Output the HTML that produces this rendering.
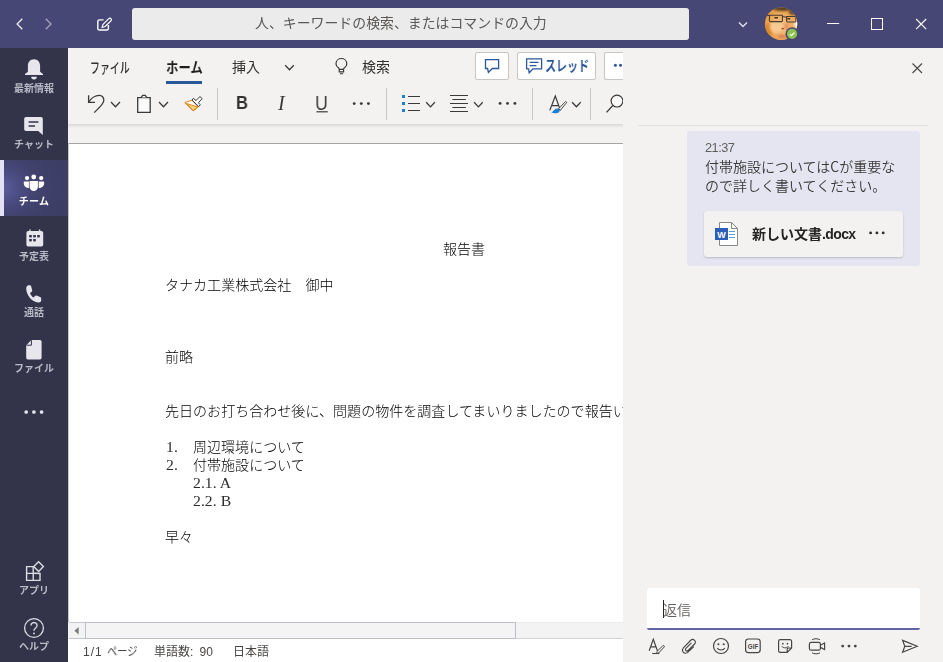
<!DOCTYPE html>
<html lang="ja"><head><meta charset="utf-8"><title>Microsoft Teams</title>
<style>
*{box-sizing:border-box;margin:0;padding:0}
html,body{width:943px;height:662px;overflow:hidden;background:#f3f2f1}
body{font-family:"Liberation Sans","Noto Sans CJK JP",sans-serif;position:relative;color:#252423}
.abs{position:absolute}
.tab,.doc,.msg,.lbl,.st,#search{will-change:transform}
svg{position:absolute;overflow:visible}
#title{left:0;top:0;width:943px;height:48px;background:#464775}
#search{left:132px;top:8px;width:557px;height:32px;background:#ebebeb;border-radius:3px;color:#5a5856;font-size:13.900px;text-align:left;padding-left:123px;line-height:29px;white-space:nowrap;font-family:"Noto Sans CJK JP","Liberation Sans",sans-serif}
#side{left:0;top:48px;width:68px;height:614px;background:#33344a}
#active{left:0;top:160px;width:68px;height:56px;background:radial-gradient(ellipse 62px 48px at 0 50%,#5e60a0 0%,#4b4c82 32%,#41426d 62%,#3d3e66 100%)}
#activebar{left:0;top:160px;width:4px;height:56px;background:#e2e2f6}
.lbl{position:absolute;left:0;width:68px;text-align:center;color:#b9b9c6;font-size:10px;font-weight:700;line-height:12px;font-family:"Noto Sans CJK JP","Liberation Sans",sans-serif;white-space:nowrap}
#docbg{left:68px;top:48px;width:555px;height:614px;background:#f3f2f1}
#page{left:68px;top:143px;width:555px;height:479px;background:#fff;border-top:1px solid #a6a6a6;border-left:1px solid #c6c6c6}
#shadow{left:68px;top:124px;width:555px;height:4px;background:linear-gradient(#d9d8d7,#f3f2f1)}
.tab{position:absolute;font-size:14px;color:#323130;line-height:18px;white-space:nowrap;font-family:"Noto Sans CJK JP","Liberation Sans",sans-serif}
.doc{letter-spacing:.04px;position:absolute;font-family:"Noto Sans CJK JP","Liberation Sans",sans-serif;font-weight:300;font-size:14px;color:#000;line-height:18px;white-space:nowrap}
.ser{font-family:"Liberation Serif","Noto Serif CJK JP",serif;font-weight:400}
.btn{position:absolute;background:#fff;border:1px solid #c8c6c4;border-radius:2px}
.sep{position:absolute;width:1px;top:88px;height:32px;background:#c8c6c4}
#sbar{left:69px;top:622px;width:554px;height:17px;background:#f3f3f3;border-top:1px solid #ececec;border-bottom:1px solid #d3d3d3}
#sbtn{left:69px;top:622px;width:17px;height:17px;background:#f3f3f3;border-top:1px solid #c2c5c9;border-bottom:1px solid #c2c5c9}
#thumb{left:85px;top:622px;width:431px;height:17px;background:#f4f4f4;border:1px solid #bcc0c6;border-left-width:1.500px}
#status{left:68px;top:639px;width:555px;height:23px;background:#fff}
.st{position:absolute;top:645px;font-size:12px;line-height:14px;color:#484644;white-space:nowrap;font-family:"Liberation Sans","Noto Sans CJK JP",sans-serif}
#panel{left:623px;top:48px;width:320px;height:614px;background:#f3f2f1}
#bubble{left:687px;top:131px;width:233px;height:135px;background:#e5e5f1;border-radius:3px}
#card{left:704px;top:211px;width:199px;height:46px;background:#f3f2f1;border-radius:3px;box-shadow:0 1px 2px rgba(0,0,0,.18)}
#input{left:647px;top:588px;width:273px;height:42px;background:#fff;border-radius:3px 3px 2px 2px;border-bottom:2px solid #6264a7}
.msg{font-weight:350;position:absolute;font-family:"Noto Sans CJK JP","Liberation Sans",sans-serif;font-size:14px;line-height:19px;color:#3b3a39;white-space:nowrap}
</style></head><body>
<!-- title bar -->
<div id="title" class="abs"></div>
<svg style="left:0;top:0" width="943" height="48" viewBox="0 0 943 48" fill="none" stroke="#fff" stroke-width="1.3">
 <path d="M22.300 18.700 L17.100 24 L22.300 29.300" stroke="#ececf4"/>
 <path d="M45.800 18.700 L51 24 L45.800 29.300" stroke="#a5a5c4"/>
 <path d="M103.600 19.900 H99.400 A1.600 1.600 0 0 0 97.800 21.500 V28.400 A1.600 1.600 0 0 0 99.400 30 H106.800 A1.600 1.600 0 0 0 108.400 28.400 V25" stroke-width="1.400"/>
 <path d="M103 24.300 L108.500 18.800 C109.300 18 110.400 18 111 18.600 C111.600 19.200 111.500 20.300 110.800 21 L105.200 26.500 L102.100 27.300Z" stroke-width="1.200"/>
 <path d="M739 22.5 L743 26.5 L747 22.5" stroke="#e0e0ec" stroke-width="1.4"/>
 <path d="M827 23.500 H839.200" stroke-width="1"/>
 <rect x="871.5" y="18.5" width="11" height="11" stroke-width="1"/>
 <path d="M916.100 19 L926.200 29.100 M926.200 19 L916.100 29.100" stroke-width="1.100"/>
</svg>
<div id="search" class="abs">人、キーワードの検索、またはコマンドの入力</div>
<!-- avatar -->
<svg style="left:764px;top:7px" width="36" height="36" viewBox="0 0 36 36">
 <defs><clipPath id="av"><circle cx="17.100" cy="16.800" r="16.200"/></clipPath>
 <radialGradient id="face" cx="50%" cy="52%" r="62%"><stop offset="0" stop-color="#f6c48c"/><stop offset="0.55" stop-color="#eeaa5c"/><stop offset="1" stop-color="#dd9232"/></radialGradient>
 <filter id="b1" x="-30%" y="-30%" width="160%" height="160%"><feGaussianBlur stdDeviation="1.1"/></filter>
 <filter id="b2" x="-30%" y="-30%" width="160%" height="160%"><feGaussianBlur stdDeviation="0.45"/></filter></defs>
 <g clip-path="url(#av)">
  <rect width="36" height="36" fill="url(#face)"/>
  <g filter="url(#b1)">
   <ellipse cx="19" cy="1.500" rx="10" ry="2.600" fill="#5a3f22"/>
   <ellipse cx="29" cy="5" rx="4" ry="3" fill="#6b4a26"/>
   <ellipse cx="4" cy="25" rx="4" ry="9" fill="#d98a2c"/>
   <ellipse cx="33" cy="17" rx="2.600" ry="4" fill="#fffdf2"/>
   <ellipse cx="12" cy="20" rx="6" ry="6" fill="#f8c992"/>
   <ellipse cx="22.500" cy="19.500" rx="2.400" ry="3.600" fill="#e8935c"/>
   <ellipse cx="18" cy="29.300" rx="4.200" ry="1.100" fill="#cf6a52"/>
   <ellipse cx="19" cy="33" rx="6" ry="2" fill="#e89f58"/>
  </g>
  <g filter="url(#b2)" fill="none" stroke="#473a32" stroke-width="1.050">
   <path d="M2.200 8.800 L5.600 8.200 H18.400 V13.800 Q18.400 14.600 17.400 14.600 H6.600 Q5.400 14.600 5.300 13.400 L5.600 8.200"/>
   <path d="M18.400 9.600 L22.600 10.200 M22.600 9.400 H31.900 V14.200 Q31.900 14.900 31 14.900 H23.600 Q22.600 14.900 22.600 14 Z M31.900 10 L34 10.200"/>
   <path d="M10.400 10.800 H14 M23.200 11.700 H26.200" stroke="#4a3424" stroke-width="1.500"/>
   <path d="M17.600 21.600 H19.800" stroke="#7a4424" stroke-width="1.200"/>
  </g>
 </g>
 <circle cx="28.050" cy="26.900" r="6.600" fill="#464775"/>
 <circle cx="28.050" cy="26.900" r="5.100" fill="#8dc24f"/>
 <path d="M25.800 27.100 L27.400 28.600 L30.300 25.700" stroke="#fff" stroke-width="1.300" fill="none"/>
</svg>
<!-- side bar -->
<div id="side" class="abs"></div>
<div id="active" class="abs"></div><div id="activebar" class="abs"></div>
<svg style="left:0;top:48px" width="68" height="614" viewBox="0 48 68 614" fill="#e6e6ec">
 <!-- bell -->
 <path d="M34 59.300 C30.200 59.300 27.900 62.200 27.900 65.800 V71.800 L25 74 V75 H43 V74 L40.100 71.800 V65.800 C40.100 62.200 37.800 59.300 34 59.300Z"/>
 <path d="M31.200 76.800 H36.800 A2.800 2.700 0 0 1 31.200 76.800Z"/>
 <!-- chat -->
 <path d="M26 117 H41 A1.8 1.8 0 0 1 42.8 118.8 V135 L38.2 131 H26 A1.8 1.8 0 0 1 24.2 129.2 V118.8 A1.8 1.8 0 0 1 26 117Z"/>
 <path d="M28.6 122 H38.4 M28.6 126 H35" stroke="#33344a" stroke-width="1.4" fill="none"/>
 <!-- teams -->
 <g fill="#fff">
  <circle cx="33.750" cy="177" r="2.400"/><circle cx="27.050" cy="178.100" r="2.150"/><circle cx="41.200" cy="178.100" r="2.150"/>
  <path d="M29.600 180.900 H37.900 V186.800 A4.150 4.150 0 0 1 29.600 186.800Z"/>
  <path d="M23.800 181.600 H28.900 V188.100 C26 188.100 23.800 186 23.800 183.600Z"/>
  <path d="M44.100 181.600 H38.700 V188.100 C41.800 188.100 44.100 186 44.100 183.600Z"/>
 </g>
 <!-- calendar -->
 <path d="M28.2 231 H41.4 A1.8 1.8 0 0 1 43.2 232.8 V244.8 A1.8 1.8 0 0 1 41.4 246.6 H28.2 A1.8 1.8 0 0 1 26.4 244.8 V232.8 A1.8 1.8 0 0 1 28.2 231Z"/>
 <path d="M30 229.4 V231.5 M39.6 229.4 V231.5" stroke="#dcdce4" stroke-width="1.4"/>
 <g fill="#33344a"><rect x="29.2" y="235" width="2.6" height="2.4"/><rect x="33.2" y="235" width="2.6" height="2.4"/><rect x="37.2" y="235" width="2.6" height="2.4"/><rect x="29.2" y="239" width="2.6" height="2.4"/><rect x="33.2" y="239" width="2.6" height="2.4"/></g>
 <!-- phone -->
 <path d="M28.200 285.200 C27 285.600 26.200 286.800 26.200 288.400 C26.400 295.600 32.400 302.200 39 302.600 C40.200 302.600 41 301.800 41.200 300.600 L41.200 298.400 C41.200 297.600 40.800 297.200 40 297 L36.600 295.600 C36 295.400 35.400 295.600 35 296 L33.600 297.600 C31.800 296.400 30.600 294.800 30 293 L31.800 291.800 C32.200 291.400 32.400 290.800 32.200 290.200 L31.200 286.400 C31 285.600 30.400 285.200 29.600 285.200Z"/>
 <!-- file -->
 <path d="M31.400 340 H40 A1.600 1.600 0 0 1 41.600 341.600 V357.800 A1.600 1.600 0 0 1 40 359.400 H27.800 A1.600 1.600 0 0 1 26.200 357.800 V345.200Z"/>
 <path d="M31.400 340.200 V345.200 H26.400" stroke="#33344a" stroke-width="1" fill="none"/>
 <!-- more -->
 <circle cx="26.200" cy="412" r="1.850"/><circle cx="33.900" cy="412" r="1.850"/><circle cx="41.600" cy="412" r="1.850"/>
 <!-- apps -->
 <g fill="none" stroke="#dcdce4" stroke-width="1.4">
  <path d="M26.6 566.6 H33.2 V580.4 H26.6Z M26.6 573.4 H40 V580.4 H33.2"/>
  <path d="M33.2 573.4 H40"/>
  <path d="M38.6 561.8 L43.4 566.6 L38.6 571.4 L33.8 566.6Z"/>
 </g>
 <!-- help -->
 <circle cx="34" cy="628" r="9.4" fill="none" stroke="#dcdce4" stroke-width="1.3"/>
 <path d="M31 625.4 A3 3 0 1 1 35.6 628 C34.4 628.8 34 629.4 34 630.8" fill="none" stroke="#dcdce4" stroke-width="1.4"/>
 <circle cx="34" cy="633.4" r="0.9"/>
</svg>
<div class="lbl" style="top:82px">最新情報</div>
<div class="lbl" style="top:138px">チャット</div>
<div class="lbl" style="top:195px;color:#fff;font-weight:700;letter-spacing:.3px">チーム</div>
<div class="lbl" style="top:250px">予定表</div>
<div class="lbl" style="top:306px">通話</div>
<div class="lbl" style="top:362px">ファイル</div>
<div class="lbl" style="top:584px">アプリ</div>
<div class="lbl" style="top:640px">ヘルプ</div>
<!-- document area -->
<div id="docbg" class="abs"></div>
<div id="shadow" class="abs"></div>
<div id="page" class="abs"></div>
<div class="tab" style="left:89.500px;top:57.500px;font-weight:500;transform:scaleX(.685);transform-origin:0 0;font-size:14.5px">ファイル</div>
<div class="tab" style="left:166px;top:58px;font-weight:700;color:#201f1e;transform:scaleX(.855);transform-origin:0 0;font-size:14.5px">ホーム</div>
<div class="abs" style="left:166px;top:81px;width:36px;height:3px;background:#2b579a"></div>
<div class="tab" style="left:232px;top:57px">挿入</div>
<div class="tab" style="left:362px;top:57px">検索</div>
<div class="btn" style="left:475px;top:52px;width:34px;height:28px"></div>
<div class="btn" style="left:517px;top:52px;width:79px;height:28px"></div>
<div class="btn" style="left:604px;top:52px;width:24px;height:28px;border-right:none"></div>
<div class="tab" style="left:545px;top:56px;font-weight:700;color:#2b579a;transform:scaleX(.76);transform-origin:0 0;font-size:14.5px">スレッド</div>
<div class="sep" style="left:217px"></div><div class="sep" style="left:386px"></div><div class="sep" style="left:532px"></div><div class="sep" style="left:590px"></div>
<svg style="left:68px;top:48px" width="555" height="76" viewBox="68 48 555 76" fill="none" stroke="#3b3a39" stroke-width="1.3">
 <path d="M285.200 65.200 L289.500 69.700 L293.800 65.200"/>
 <!-- bulb -->
 <path d="M339.200 69.300 L338.700 68 C336.600 66.700 335.900 65 336 63.400 C336.200 60.400 338.600 58.500 341.400 58.500 C344.200 58.500 346.600 60.400 346.800 63.400 C346.900 65 346.200 66.700 344.100 68 L343.600 69.300Z M339.200 69.300 V71.900 H343.600 V69.300 M339.900 73.700 H343.100" stroke-width="1.150"/>
 <!-- comment -->
 <path d="M485.500 59.600 H498.600 V68.500 H492.300 L488.400 72.400 L487.600 68.500 H485.500Z" stroke="#2b579a" stroke-width="1.300"/>
 <!-- thread icon -->
 <path d="M526.600 58.800 H541.600 V68.800 H533 L529.200 72.800 L528.600 68.800 H526.600Z M529.600 62.400 H538.600 M529.600 65.600 H536.400" stroke="#2b579a" stroke-width="1.300"/>
 <g fill="#2b579a" stroke="none"><circle cx="615.400" cy="65.200" r="1.500"/><circle cx="620.500" cy="65.300" r="1.500"/></g>
 <!-- undo -->
 <path d="M88.6 95.2 V102.3 H95"/>
 <path d="M88.9 102 C91 98.400 95.300 95.300 99.300 95.300 C102.4 95.300 104 98 103.800 100.8 C103.5 104.2 99 108 94.2 112.600"/>
 <path d="M111 102 L115.500 106.800 L120 102"/>
 <!-- clipboard -->
 <path d="M137.700 97.600 H150.200 V112.300 H137.700Z" fill="#fafafa"/>
 <path d="M141.200 97.600 L142.600 95.400 H145.300 L146.700 97.600" fill="#fafafa"/>
 <path d="M159 102 L163.500 106.800 L168 102"/>
 <!-- format painter -->
 <path d="M184.800 102.600 L191.900 100.200 L198.200 106.900 L193.200 110.900Z" stroke="#e07b12" fill="#fff" stroke-width="1"/>
 <path d="M186.500 103.500 L197.600 107 L193.300 110.500Z" stroke="#e07b12" fill="#fbd276" stroke-width="0.9"/>
 <path d="M192 100 L193.300 98.300 L196 100.500 L200 96.600 L202.200 98.600 L198.400 102.700 L200.300 104.800 L198.800 106.600Z" stroke="#3b3a39" stroke-width="1" fill="#fff"/>
 <!-- more dots -->
 <g fill="#3b3a39" stroke="none"><circle cx="354.200" cy="103.600" r="1.45"/><circle cx="361.300" cy="103.600" r="1.45"/><circle cx="368.400" cy="103.600" r="1.45"/>
 <circle cx="500.100" cy="103.400" r="1.45"/><circle cx="507.500" cy="103.400" r="1.45"/><circle cx="514.900" cy="103.400" r="1.45"/></g>
 <!-- U underline -->
 <path d="M316.500 111.800 H327.800" stroke-width="1.200"/>
 <!-- bullets -->
 <g stroke="none" fill="#1e7fd0"><rect x="402" y="95" width="3" height="3"/><rect x="402" y="102" width="3" height="3"/><rect x="402" y="109" width="3" height="3"/></g>
 <path d="M408 96.500 H420 M408 103.500 H420 M408 110.500 H420" stroke-width="1.200"/>
 <path d="M426.200 102.300 L430.500 106.900 L434.800 102.300"/>
 <!-- align -->
 <path d="M450 95.500 H468 M452.400 99.500 H465.800 M450 103.500 H468 M452.400 107.500 H465.800 M450 111.500 H468" stroke-width="1.200"/>
 <path d="M474.100 102.300 L478.400 106.900 L482.700 102.300"/>
 <!-- styles A -->
 <path d="M549.800 110.400 L555.300 96 L560.400 110.400 M551.500 105.600 H558.200" stroke-width="1.200"/>
 <path d="M558.600 108.800 L565.600 101.400 L566.800 102.400 L560.400 110.200Z" stroke-width="0.900" fill="#f3f2f1"/>
 <path d="M551.400 112.600 C553.400 111.600 554.400 108.600 557.400 108.600 C559.400 108.600 560.400 110.600 559.200 112 C557.600 113.800 553.800 113.600 551.400 112.600Z" fill="#1e7fd0" stroke="none"/>
 <path d="M572.100 102.200 L576.400 106.800 L580.700 102.200"/>
 <!-- search glass -->
 <circle cx="617" cy="101.100" r="5.900" stroke-width="1.200" fill="#fafafa"/>
 <path d="M612.600 105.700 L606.500 112.400" stroke-width="1.300"/>
</svg>
<div class="tab" style="left:235.800px;top:92.300px;font-family:'Liberation Sans',sans-serif;font-weight:700;font-size:19px;line-height:22px;color:#323130;transform:scaleX(.87);transform-origin:0 0">B</div>
<div class="tab" style="left:278px;top:92px;font-family:'Liberation Serif',serif;font-style:italic;font-size:20px;line-height:22px;color:#3b3a39">I</div>
<div class="tab" style="left:315.200px;top:92.300px;font-family:'Liberation Sans',sans-serif;font-size:19.600px;line-height:22px;color:#3b3a39;transform:scaleX(.9);transform-origin:0 0">U</div>
<!-- doc text -->
<div class="doc" style="left:443px;top:239px">報告書</div>
<div class="doc" style="left:165px;top:275px">タナカ工業株式会社　御中</div>
<div class="doc" style="left:165px;top:347px">前略</div>
<div class="doc" style="left:165px;top:401px;width:458px;overflow:hidden">先日のお打ち合わせ後に、問題の物件を調査してまいりましたので報告いたします。</div>
<div class="doc ser" style="left:166px;top:439px;transform:scaleX(1.12);transform-origin:0 0;color:#2b2b2b">1.</div><div class="doc" style="left:193px;top:437px">周辺環境について</div>
<div class="doc ser" style="left:166px;top:457px;transform:scaleX(1.12);transform-origin:0 0;color:#2b2b2b">2.</div><div class="doc" style="left:193px;top:455px">付帯施設について</div>
<div class="doc ser" style="left:193px;top:475px;transform:scaleX(1.12);transform-origin:0 0;color:#2b2b2b">2.1. A</div>
<div class="doc ser" style="left:193px;top:493px;transform:scaleX(1.12);transform-origin:0 0;color:#2b2b2b">2.2. B</div>
<div class="doc" style="left:165px;top:527px">早々</div>
<!-- scrollbar / status -->
<div id="status" class="abs"></div>
<div id="sbar" class="abs"></div><div id="sbtn" class="abs"></div><div id="thumb" class="abs"></div>
<svg style="left:68px;top:622px" width="17" height="17" viewBox="0 0 17 17"><path d="M10.6 5 L6.4 8.8 L10.6 12.6Z" fill="#7a7a7a"/></svg>
<div class="st" style="left:83px;letter-spacing:1px">1/1</div><div class="st" style="left:106.500px;transform:scaleX(.85);transform-origin:0 0">ページ</div>
<div class="st" style="left:153.500px;word-spacing:2.800px">単語数: 90</div>
<div class="st" style="left:233px">日本語</div>
<!-- right panel -->
<div id="panel" class="abs"></div>
<div class="abs" style="left:638px;top:125px;width:290px;height:1px;background:#e3e1df"></div>
<svg style="left:623px;top:48px" width="320" height="614" viewBox="623 48 320 614" fill="none" stroke="#484644" stroke-width="1.2">
 <path d="M912.5 63.5 L922 73 M922 63.5 L912.5 73" stroke-width="1.1"/>
</svg>
<div id="bubble" class="abs"></div>
<div class="msg" style="left:705px;top:140px;font-size:12.800px;letter-spacing:-.55px;line-height:16px;color:#605e5c;font-family:'Liberation Sans',sans-serif">21:37</div>
<div class="msg" style="left:705px;top:157px">付帯施設についてはCが重要な</div>
<div class="msg" style="left:705px;top:176px">ので詳しく書いてください。</div>
<div id="card" class="abs"></div>
<svg style="left:704px;top:211px" width="199" height="46" viewBox="704 211 199 46" fill="none">
 <path d="M719.5 222.5 H731.5 L737.5 228.5 V245.5 H719.5Z" fill="#fff" stroke="#8a8886" stroke-width="1"/>
 <path d="M731.5 222.5 V228.5 H737.5" stroke="#8a8886" stroke-width="1"/>
 <path d="M729 231.5 H735 M729 234.5 H735 M729 237.5 H735" stroke="#5b9bd5" stroke-width="1"/>
 <rect x="715" y="228" width="13" height="12" fill="#2b5eb9"/>
 <text x="721.5" y="237.6" font-family="Liberation Sans, sans-serif" font-weight="700" font-size="9" fill="#fff" text-anchor="middle">W</text>
 <g fill="#323130"><circle cx="870.600" cy="232.900" r="1.450"/><circle cx="876.900" cy="232.900" r="1.450"/><circle cx="883.200" cy="232.900" r="1.450"/></g>
</svg>
<div class="msg" style="left:752px;top:224px;font-weight:700;color:#252423">新しい文書<span style="font-weight:700;letter-spacing:-.62px;font-family:'Liberation Sans',sans-serif">.docx</span></div>
<div id="input" class="abs"></div>
<div class="abs" style="left:663px;top:600px;width:1px;height:18px;background:#252423"></div>
<div class="msg" style="left:663px;top:600px;color:#605e5c">返信</div>
<svg style="left:640px;top:634px" width="290" height="26" viewBox="640 634 290 26" fill="none" stroke="#484644" stroke-width="1.200">
 <!-- format -->
 <path d="M649.200 650.700 L653.300 639.300 L657.400 650.700 M650.600 646.900 H656"/>
 <path d="M657 651.400 L662.900 645.700 C663.700 645 664.900 646.200 664.200 647 L658.600 653 C657.600 653.900 656 652.400 657 651.400Z" stroke-width="1"/>
 <path d="M652.200 653.500 H659.400" stroke-width="1.100"/>
 <!-- clip -->
 <path d="M693.800 646.600 L688 652.200 C686.400 653.700 683.900 653.500 682.900 651.700 C682.100 650.300 682.400 648.900 683.400 647.800 L690.500 640.500 C691.700 639.300 693.500 639.300 694.600 640.300 C695.700 641.300 695.700 642.900 694.600 644 L688.100 650.500 C687.500 651.100 686.500 651.100 685.900 650.500 C685.300 649.900 685.300 649 685.900 648.400 L691.400 642.800" stroke-width="1.100"/>
 <!-- smile -->
 <circle cx="721" cy="646" r="7.500"/>
 <circle cx="718.400" cy="644.200" r="1.050" fill="#484644" stroke="none"/><circle cx="723.700" cy="644.200" r="1.050" fill="#484644" stroke="none"/>
 <path d="M717.200 648 C718.800 650.700 723.200 650.700 724.800 648" stroke-width="1.100"/>
 <!-- gif -->
 <rect x="745.600" y="639" width="14.600" height="13.600" rx="2.800"/>
 <text x="753" y="648.700" font-family="Liberation Sans, sans-serif" font-weight="700" font-size="7.300" fill="#484644" stroke="none" text-anchor="middle" textLength="10.400" lengthAdjust="spacingAndGlyphs">GIF</text>
 <!-- sticker -->
 <path d="M780.200 639.700 H790 A1.600 1.600 0 0 1 791.600 641.300 V648 L787.200 652.400 H780.200 A1.600 1.600 0 0 1 778.600 650.800 V641.300 A1.600 1.600 0 0 1 780.200 639.700Z M791.600 648 H788.400 A1.200 1.200 0 0 0 787.200 649.200 V652.400"/>
 <circle cx="782.900" cy="643.700" r="0.850" fill="#484644" stroke="none"/><circle cx="787.400" cy="643.700" r="0.850" fill="#484644" stroke="none"/>
 <path d="M781.800 646.200 C783 648.400 787.300 648.400 788.500 646.200" stroke-width="1"/>
 <!-- meet now -->
 <rect x="809.400" y="642.400" width="11" height="7.800" rx="1.800"/>
 <path d="M820.400 645.200 L824.600 643 V649.600 L820.400 647.400"/>
 <path d="M812 639.800 C814.200 638.400 817.800 638.400 820 639.800 M812 652.800 C814.200 654.200 817.800 654.200 820 652.800" stroke-width="1"/>
 <!-- more -->
 <g fill="#484644" stroke="none"><circle cx="842.700" cy="646.100" r="1.450"/><circle cx="849" cy="646.100" r="1.450"/><circle cx="855.300" cy="646.100" r="1.450"/></g>
 <!-- send -->
 <path d="M902.600 640.400 L917.200 646.300 L902.600 652.300 L904.800 646.300Z M904.800 646.300 H911.600"/>
</svg>
</body></html>
